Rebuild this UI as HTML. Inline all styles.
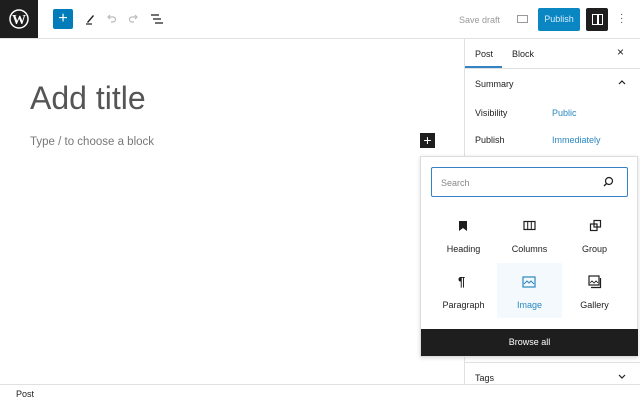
<!DOCTYPE html>
<html><head><style>
*{box-sizing:border-box;margin:0;padding:0}
body{width:640px;height:400px;overflow:hidden;background:#fff;font-family:"Liberation Sans",sans-serif;position:relative;color:#1e1e1e}
.a{position:absolute}
.t{font-size:9px}
</style></head><body>
<div class="a" style="left:0;top:0;width:640px;height:39px;border-bottom:1px solid #e0e0e0"></div>
<div class="a" style="left:0;top:0;width:38px;height:38px;background:#1e1e1e"></div>
<svg class="a" style="left:9px;top:9px" width="20" height="20" viewBox="0 0 20 20"><circle cx="10" cy="10" r="9" fill="none" stroke="#fff" stroke-width="1.5"/><text x="10" y="15" font-family="Liberation Serif" font-size="14" font-weight="bold" fill="#fff" text-anchor="middle">W</text></svg>
<div class="a" style="left:53px;top:9px;width:20px;height:20px;background:#007cba;border-radius:2px;color:#fff;font-size:16px;line-height:19px;text-align:center">+</div>
<svg class="a" style="left:83px;top:12px" width="14" height="14" viewBox="0 0 14 14"><path d="M4 10 L10 3 L11 4 L5 11Z" fill="#1e1e1e"/><path d="M3 12h6" stroke="#1e1e1e" stroke-width="1.2"/></svg>
<svg class="a" style="left:105px;top:13px" width="12" height="12" viewBox="0 0 12 12"><path d="M3 4h5a2.5 2.5 0 010 5H6M5 2L3 4l2 2" fill="none" stroke="#bbb" stroke-width="1.2"/></svg>
<svg class="a" style="left:128px;top:13px" width="12" height="12" viewBox="0 0 12 12"><path d="M9 4H4a2.5 2.5 0 000 5h2M7 2l2 2-2 2" fill="none" stroke="#bbb" stroke-width="1.2"/></svg>
<svg class="a" style="left:150px;top:13px" width="14" height="12" viewBox="0 0 14 12"><path d="M1 2h8M3 6h8M5 10h8" stroke="#1e1e1e" stroke-width="1.3"/></svg>
<div class="a t" style="left:459px;top:15px;color:#999">Save draft</div>
<div class="a" style="left:517px;top:15px;width:11px;height:8px;border:1px solid #999"></div>
<div class="a" style="left:538px;top:8px;width:42px;height:23px;background:#0a86c2;border-radius:2px;color:#d6ecf8;font-size:9px;line-height:23px;text-align:center">Publish</div>
<div class="a" style="left:586px;top:8px;width:22px;height:23px;background:#1e1e1e;border-radius:2px"></div>
<div class="a" style="left:592px;top:14px;width:11px;height:11px;border:1.5px solid #fff"></div>
<div class="a" style="left:597px;top:14px;width:1.5px;height:11px;background:#fff"></div>
<div class="a" style="left:620px;top:13px;font-size:10px;line-height:4px;color:#444">·<br>·<br>·</div>
<div class="a" style="left:30px;top:80px;font-size:32px;color:#555">Add title</div>
<div class="a" style="left:30px;top:136px;font-size:11.5px;color:#777">Type / to choose a block</div>
<div class="a" style="left:420px;top:133px;width:15px;height:15px;background:#1e1e1e;color:#fff;font-size:14px;line-height:14px;text-align:center">+</div>
<div class="a" style="left:464px;top:39px;width:1px;height:345px;background:#e0e0e0"></div>
<div class="a t" style="left:475px;top:49px">Post</div>
<div class="a t" style="left:512px;top:49px">Block</div>
<div class="a" style="left:465px;top:66px;width:37px;height:2px;background:#3582c4"></div>
<div class="a" style="left:465px;top:68px;width:175px;height:1px;background:#e0e0e0"></div>
<div class="a" style="left:617px;top:45px;font-size:12px">×</div>
<div class="a t" style="left:475px;top:79px">Summary</div>
<svg class="a" style="left:617px;top:78px" width="10" height="8"><path d="M2 6l3-3 3 3" fill="none" stroke="#1e1e1e" stroke-width="1.2"/></svg>
<div class="a t" style="left:475px;top:108px">Visibility</div>
<div class="a t" style="left:552px;top:108px;color:#2a88c0">Public</div>
<div class="a t" style="left:475px;top:135px">Publish</div>
<div class="a t" style="left:552px;top:135px;color:#2a88c0">Immediately</div>
<div class="a" style="left:420px;top:156px;width:218px;height:201px;background:#fff;border:1px solid #ddd;box-shadow:0 1px 4px rgba(0,0,0,.15)"></div>
<div class="a" style="left:431px;top:167px;width:197px;height:30px;border:1px solid #3582c4;border-radius:2px"></div>
<div class="a t" style="left:441px;top:178px;color:#888">Search</div>
<svg class="a" style="left:602px;top:176px" width="12" height="12"><circle cx="7" cy="5" r="3.5" fill="none" stroke="#1e1e1e" stroke-width="1.2"/><path d="M4.5 7.5L2 10" stroke="#1e1e1e" stroke-width="1.3"/></svg>
<div class="a" style="left:497px;top:263px;width:65px;height:55px;background:#f3f9fc"></div>
<svg class="a" style="left:457px;top:220px" width="12" height="12"><path d="M2 1h8v10L6 8 2 11z" fill="#1e1e1e"/></svg>
<svg class="a" style="left:523px;top:220px" width="13" height="12"><rect x="1" y="1.5" width="11" height="8" fill="none" stroke="#1e1e1e" stroke-width="1.2"/><path d="M4.7 1.5v8M8.3 1.5v8" stroke="#1e1e1e"/></svg>
<svg class="a" style="left:589px;top:219px" width="13" height="13"><rect x="1.5" y="5" width="6.5" height="6.5" fill="none" stroke="#1e1e1e" stroke-width="1.2"/><rect x="5" y="1.5" width="6.5" height="6.5" fill="none" stroke="#1e1e1e" stroke-width="1.2"/></svg>
<div class="a t" style="left:420px;top:244px;width:87px;text-align:center">Heading</div>
<div class="a t" style="left:486px;top:244px;width:87px;text-align:center">Columns</div>
<div class="a t" style="left:551px;top:244px;width:87px;text-align:center">Group</div>
<div class="a" style="left:458px;top:274px;font-size:13px;font-weight:bold">¶</div>
<svg class="a" style="left:522px;top:276px" width="14" height="12"><rect x="1" y="1" width="12" height="10" fill="none" stroke="#2a88c0" stroke-width="1.2"/><path d="M2 8l3-3 2 2 2-2 3 3" fill="none" stroke="#2a88c0"/></svg>
<svg class="a" style="left:588px;top:275px" width="14" height="14"><rect x="1" y="1" width="10" height="9" fill="none" stroke="#1e1e1e" stroke-width="1.2"/><path d="M3 12.5h9.5V3" fill="none" stroke="#1e1e1e" stroke-width="1.2"/><path d="M2 8l2-2 2 2 2-2 2 2" fill="none" stroke="#1e1e1e" stroke-width=".8"/></svg>
<div class="a t" style="left:420px;top:300px;width:87px;text-align:center">Paragraph</div>
<div class="a t" style="left:486px;top:300px;width:87px;text-align:center;color:#2a88c0">Image</div>
<div class="a t" style="left:551px;top:300px;width:87px;text-align:center">Gallery</div>
<div class="a" style="left:421px;top:329px;width:217px;height:27px;background:#1e1e1e;color:#fff;font-size:9px;line-height:27px;text-align:center">Browse all</div>
<div class="a" style="left:465px;top:362px;width:175px;height:1px;background:#e0e0e0"></div>
<div class="a t" style="left:475px;top:373px">Tags</div>
<svg class="a" style="left:617px;top:373px" width="10" height="8"><path d="M2 2l3 3 3-3" fill="none" stroke="#1e1e1e" stroke-width="1.2"/></svg>
<div class="a" style="left:0;top:384px;width:640px;height:16px;border-top:1px solid #e0e0e0;background:#fff"></div>
<div class="a t" style="left:16px;top:389px">Post</div>
</body></html>
